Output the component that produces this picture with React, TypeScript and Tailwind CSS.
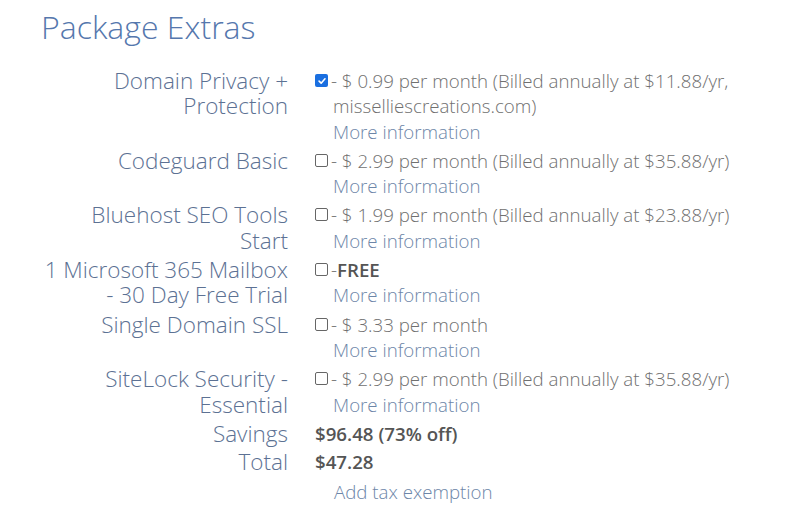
import React from "react";

type Extra = {
  label: string[];
  checked?: boolean;
  price: React.ReactNode;
};

const extras: Extra[] = [
  {
    label: ["Domain Privacy +", "Protection"],
    checked: true,
    price: (
      <>
        - $ 0.99 per month (Billed annually at $11.88/yr,
        <br />
        <span className="pl-[2px]">misselliescreations.com)</span>
      </>
    ),
  },
  { label: ["Codeguard Basic"], price: "- $ 2.99 per month (Billed annually at $35.88/yr)" },
  { label: ["Bluehost SEO Tools", "Start"], price: "- $ 1.99 per month (Billed annually at $23.88/yr)" },
  {
    label: ["1 Microsoft 365 Mailbox", "- 30 Day Free Trial"],
    price: (
      <>
        -<span className="font-semibold text-[#555]">FREE</span>
      </>
    ),
  },
  { label: ["Single Domain SSL"], price: "- $ 3.33 per month" },
  { label: ["SiteLock Security -", "Essential"], price: "- $ 2.99 per month (Billed annually at $35.88/yr)" },
];

function Checkbox({ checked }: { checked?: boolean }) {
  if (checked) {
    return (
      <span className="mt-[6px] flex h-[13px] w-[13px] shrink-0 items-center justify-center rounded-[2px] bg-[#1a6fe0]">
        <svg viewBox="0 0 12 12" className="h-[10px] w-[10px]">
          <path d="M2.5 6.2 L5 8.6 L9.6 3.4" fill="none" stroke="white" strokeWidth="1.9" strokeLinecap="round" strokeLinejoin="round" />
        </svg>
      </span>
    );
  }
  return <span className="mt-[6px] h-[13px] w-[13px] shrink-0 rounded-[2px] border border-[#666] bg-white" />;
}

export default function App() {
  return (
    <div className="min-h-[527px] w-[800px] bg-white pt-[7px] font-['Open_Sans',sans-serif]">
      <h2 className="pl-[41px] text-[32px] leading-[40px] font-light text-[#5577ad]">Package Extras</h2>

      <div className="mt-[21px] flex flex-col">
        <div className="flex flex-col gap-[4px]">
          {extras.map((e, i) => (
            <div key={i} className="flex">
              <div className="w-[288px] shrink-0 text-right text-[22.5px] leading-[25.3px] font-light whitespace-nowrap text-[#5c7193]">
                {e.label.map((l, j) => (
                  <div key={j}>{l}</div>
                ))}
              </div>
              <div className="ml-[27px] flex gap-[3px]">
                <Checkbox checked={e.checked} />
                <div className="text-[18.7px] leading-[25.3px] font-light whitespace-nowrap text-[#707070]">
                  <div>{e.price}</div>
                  <div className="pl-[2px] text-[#6d86a8]">More information</div>
                </div>
              </div>
            </div>
          ))}
        </div>

        <div className="mt-[4px] flex">
          <div className="w-[288px] shrink-0 text-right text-[22.5px] leading-[26px] font-light text-[#5c7193]">Savings</div>
          <div className="ml-[27px] text-[18.7px] leading-[26px] font-semibold text-[#555]">$96.48 (73% off)</div>
        </div>
        <div className="mt-[2px] flex">
          <div className="w-[288px] shrink-0 text-right text-[22.5px] leading-[26px] font-light text-[#5c7193]">Total</div>
          <div className="ml-[27px] text-[18.7px] leading-[26px] font-semibold text-[#555]">$47.28</div>
        </div>
        <div className="mt-[4px] flex">
          <div className="w-[288px] shrink-0" />
          <div className="ml-[46px] text-[18.7px] leading-[26px] font-light text-[#6d86a8]">Add tax exemption</div>
        </div>
      </div>
    </div>
  );
}
